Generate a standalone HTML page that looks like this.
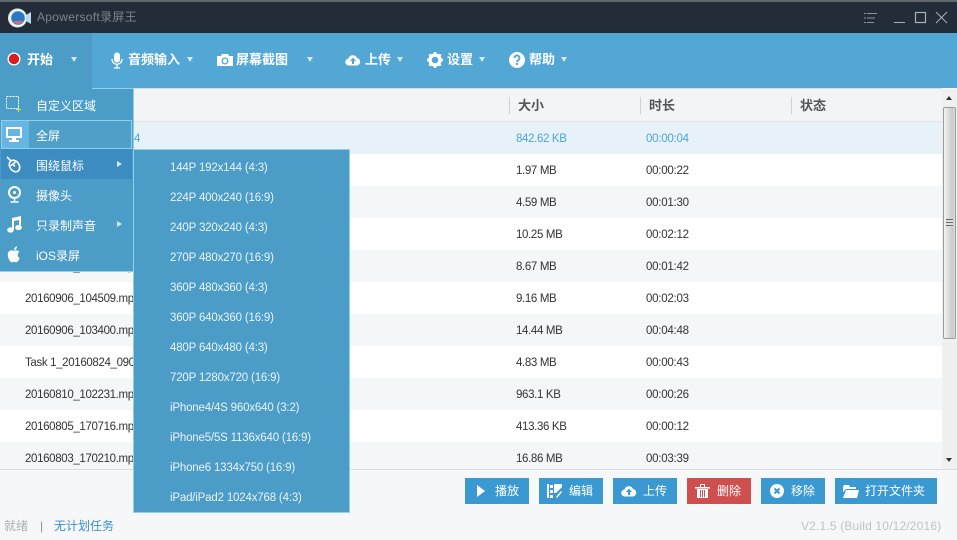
<!DOCTYPE html>
<html><head><meta charset="utf-8">
<style>
html,body{margin:0;padding:0}
body{width:957px;height:540px;overflow:hidden;position:relative;background:#f5f7f9;font-family:"Liberation Sans","Noto Sans CJK SC",sans-serif;font-size:12px;color:#333}
.a{position:absolute}
.t{position:absolute;white-space:nowrap;line-height:16px}
.tb{color:#fff;font-weight:bold;font-size:13px}
.tri{position:absolute;width:0;height:0;border-left:3.5px solid transparent;border-right:3.5px solid transparent;border-top:5px solid #d5e8f3}
.row{position:absolute;left:0;width:942px;height:32px}
.sz{position:absolute;left:516px;margin-top:1px;line-height:16px;white-space:nowrap;font-size:11.5px;letter-spacing:-.35px;color:#333}
.du{position:absolute;left:646px;margin-top:1px;line-height:16px;white-space:nowrap;font-size:11.5px;letter-spacing:-.25px;color:#333}
.fn{position:absolute;left:25px;margin-top:1px;line-height:16px;white-space:nowrap;font-size:11.5px;letter-spacing:-.35px;color:#333}
.hd{position:absolute;top:98px;font-weight:bold;font-size:13px;color:#555;line-height:16px}
.sep{position:absolute;top:97px;width:1px;height:17px;background:#ccd2d7}
.mi{position:absolute;left:36px;color:#fff;font-size:12px;line-height:16px;white-space:nowrap}
.si{position:absolute;left:170px;margin-top:1px;color:#eaf4fa;font-size:11.5px;letter-spacing:-.18px;line-height:16px;white-space:nowrap}
.btn{position:absolute;top:478px;height:26px;background:#3b99d1;color:#fff;font-size:12px;line-height:26px}
.btn span{position:absolute;white-space:nowrap}
.btn svg{position:absolute}
</style></head><body>

<div class="a" style="left:0;top:0;width:957px;height:33px;background:#222d39"></div>
<div class="a" style="left:0;top:0;width:957px;height:2px;background:#5f676d"></div>
<svg class="a" style="left:8px;top:7px" width="24" height="22" viewBox="0 0 24 22">
<circle cx="9.500" cy="11" r="9.500" fill="#e9f3f9"/><circle cx="10" cy="11" r="6.800" fill="#2a78c8"/><path d="M4.500 14a6.500 6.500 0 0 0 11 0z" fill="#e0686a"/><path d="M18 8l5-3v12l-5-3z" fill="#b9dcef"/>
</svg>
<div class="t" style="left:37px;top:9px;color:#7d858c;font-size:12px;letter-spacing:.3px">Apowersoft录屏王</div>
<svg class="a" style="left:860px;top:10px" width="90" height="16" viewBox="0 0 90 16" fill="none" stroke="#aab0b5" stroke-width="1">
<path d="M7 3.500h10M7 8h8M7 12.500h7M4 3.500h2M4 8h2M4 12.500h2" stroke="#8f969c"/>
<path d="M34 12.500h11"/><rect x="55.500" y="2.500" width="10" height="10" stroke-width="1.200"/>
<path d="M76 2l11 11M87 2l-11 11"/>
</svg>

<div class="a" style="left:0;top:33px;width:957px;height:55px;background:#52a7d4"></div>
<div class="a" style="left:0;top:33px;width:92px;height:55px;background:#4b9dc8"></div>
<svg class="a" style="left:7px;top:52px" width="14" height="14"><circle cx="7" cy="7" r="6.500" fill="#fff"/><circle cx="7" cy="7" r="5.200" fill="#d81e1e"/></svg>
<div class="t tb" style="left:27px;top:52px">开始</div>
<div class="tri" style="left:71px;top:57px"></div>
<svg class="a" style="left:110px;top:52px" width="14" height="17" viewBox="0 0 14 17"><rect x="4" y="0.500" width="6" height="10" rx="3" fill="#fff"/><path d="M2 7c0 7 10 7 10 0M7 12v4M4 16h6" stroke="#fff" stroke-width="1.300" fill="none"/></svg>
<div class="t tb" style="left:128px;top:52px">音频输入</div>
<div class="tri" style="left:187px;top:57px"></div>
<svg class="a" style="left:217px;top:53px" width="16" height="14" viewBox="0 0 16 14"><path d="M0 3h4l1-2h6l1 2h4v10H0z" fill="#fff"/><circle cx="8" cy="8" r="3.500" fill="#52a7d4"/><circle cx="8" cy="8" r="2.200" fill="#fff"/></svg>
<div class="t tb" style="left:236px;top:52px">屏幕截图</div>
<div class="tri" style="left:307px;top:57px"></div>
<svg class="a" style="left:345px;top:54px" width="16" height="12" viewBox="0 0 16 12"><path d="M4 11.500a3.500 3.500 0 0 1-.5-7A4.500 4.500 0 0 1 12 4a3.800 3.800 0 0 1 0 7.500z" fill="#fff"/><path d="M8 3.500l3 3.500H9v3H7V7H5z" fill="#52a7d4"/></svg>
<div class="t tb" style="left:365px;top:52px">上传</div>
<div class="tri" style="left:397px;top:57px"></div>
<svg class="a" style="left:427px;top:52px" width="16" height="16" viewBox="0 0 16 16"><circle cx="8" cy="8" r="5" fill="none" stroke="#fff" stroke-width="3.400"/><path d="M8 0v3M8 13v3M0 8h3M13 8h3M2.300 2.300l2 2M11.700 11.700l2 2M13.700 2.300l-2 2M4.300 11.700l-2 2" stroke="#fff" stroke-width="2.400"/></svg>
<div class="t tb" style="left:447px;top:52px">设置</div>
<div class="tri" style="left:479px;top:57px"></div>
<svg class="a" style="left:509px;top:52px" width="16" height="16" viewBox="0 0 16 16"><circle cx="8" cy="8" r="8" fill="#fff"/><path d="M5.500 6a2.500 2.500 0 1 1 3.800 2.100C8.400 8.700 8 9 8 10" stroke="#52a7d4" stroke-width="1.800" fill="none"/><rect x="7" y="11" width="2" height="2" fill="#52a7d4"/></svg>
<div class="t tb" style="left:529px;top:52px">帮助</div>
<div class="tri" style="left:561px;top:57px"></div>

<div class="a" style="left:0;top:88px;width:942px;height:34px;background:#f2f4f6;border-top:1px solid #cfe0ea;box-sizing:border-box"></div>
<div class="a" style="left:0;top:121px;width:942px;height:1px;background:#dfe6eb"></div>
<div class="sep" style="left:509px"></div><div class="sep" style="left:640px"></div><div class="sep" style="left:791px"></div>
<div class="hd" style="left:518px">大小</div><div class="hd" style="left:649px">时长</div><div class="hd" style="left:800px">状态</div>

<div class="row" style="top:122px;background:#e6f2f8"></div>
<div class="row" style="top:154px;background:#fff"></div>
<div class="row" style="top:186px;background:#f5f6f8"></div>
<div class="row" style="top:218px;background:#fff"></div>
<div class="row" style="top:250px;background:#f5f6f8"></div>
<div class="row" style="top:282px;background:#fff"></div>
<div class="row" style="top:314px;background:#f5f6f8"></div>
<div class="row" style="top:346px;background:#fff"></div>
<div class="row" style="top:378px;background:#f5f6f8"></div>
<div class="row" style="top:410px;background:#fff"></div>
<div class="row" style="top:442px;height:27px;background:#f5f6f8"></div>
<div class="a" style="left:0;top:469px;width:957px;height:1px;background:#d5dee4"></div>

<div class="fn" style="top:130px;left:134px;color:#4ea4d6">4</div>
<div class="fn" style="top:258px">20160906_105512.mp4</div>
<div class="fn" style="top:290px">20160906_104509.mp4</div>
<div class="fn" style="top:322px">20160906_103400.mp4</div>
<div class="fn" style="top:354px">Task 1_20160824_090000.mp4</div>
<div class="fn" style="top:386px">20160810_102231.mp4</div>
<div class="fn" style="top:418px">20160805_170716.mp4</div>
<div class="fn" style="top:450px">20160803_170210.mp4</div>

<div class="sz" style="top:130px;color:#4ea4d6">842.62 KB</div><div class="du" style="top:130px;color:#4ea4d6">00:00:04</div>
<div class="sz" style="top:162px">1.97 MB</div><div class="du" style="top:162px">00:00:22</div>
<div class="sz" style="top:194px">4.59 MB</div><div class="du" style="top:194px">00:01:30</div>
<div class="sz" style="top:226px">10.25 MB</div><div class="du" style="top:226px">00:02:12</div>
<div class="sz" style="top:258px">8.67 MB</div><div class="du" style="top:258px">00:01:42</div>
<div class="sz" style="top:290px">9.16 MB</div><div class="du" style="top:290px">00:02:03</div>
<div class="sz" style="top:322px">14.44 MB</div><div class="du" style="top:322px">00:04:48</div>
<div class="sz" style="top:354px">4.83 MB</div><div class="du" style="top:354px">00:00:43</div>
<div class="sz" style="top:386px">963.1 KB</div><div class="du" style="top:386px">00:00:26</div>
<div class="sz" style="top:418px">413.36 KB</div><div class="du" style="top:418px">00:00:12</div>
<div class="sz" style="top:450px">16.86 MB</div><div class="du" style="top:450px">00:03:39</div>

<div class="a" style="left:942px;top:89px;width:15px;height:380px;background:#f0f0f0"></div>
<div class="a" style="left:943px;top:107px;width:13px;height:232px;box-sizing:border-box;border:1px solid #9a9a9a;border-radius:2px;background:linear-gradient(90deg,#f2f2f2,#d6d6d6 55%,#c8c8c8 80%,#e2e2e2)"></div>
<div class="a" style="left:946px;top:219px;width:7px;height:8px;background:repeating-linear-gradient(180deg,#666 0 1px,#ddd 1px 3px)"></div>
<div class="a" style="left:946px;top:96px;width:0;height:0;border-left:3.500px solid transparent;border-right:3.500px solid transparent;border-bottom:4px solid #333"></div>
<div class="a" style="left:946px;top:458px;width:0;height:0;border-left:3.500px solid transparent;border-right:3.500px solid transparent;border-top:4px solid #333"></div>

<div class="btn" style="left:465px;width:64px"><svg style="left:12px;top:7px" width="8" height="12"><path d="M0 0l8 6-8 6z" fill="#fff"/></svg><span style="left:30px">播放</span></div>
<div class="btn" style="left:539px;width:64px"><svg style="left:8px;top:6px" width="15" height="14"><path d="M0 0h2v14H0zM3 1h3v3H3zM3 6h3v3H3zM3 11h3v3H3zM7 0h8v3l-6 6-2 0z" fill="#fff"/><path d="M9 13l5-6 1 1-5 6z" fill="#fff"/></svg><span style="left:30px">编辑</span></div>
<div class="btn" style="left:613px;width:64px"><svg style="left:8px;top:6px" width="16" height="14" viewBox="0 0 16 12"><path d="M4 11.500a3.500 3.500 0 0 1-.5-7A4.500 4.500 0 0 1 12 4a3.800 3.800 0 0 1 0 7.500z" fill="#fff"/><path d="M8 3.500l3 3.500H9v3H7V7H5z" fill="#3b99d1"/></svg><span style="left:30px">上传</span></div>
<div class="btn" style="left:687px;width:64px;background:#cf4f4f"><svg style="left:8px;top:6px" width="15" height="14"><path d="M0 3h15v1.500H0zM5 0h5v3H9V1H6v2H5zM2 5h11v9H2z" fill="#fff"/><path d="M5.500 6v7M7.500 6v7M9.500 6v7" stroke="#cf4f4f"/></svg><span style="left:30px">删除</span></div>
<div class="btn" style="left:761px;width:64px"><svg style="left:9px;top:6px" width="14" height="14"><circle cx="7" cy="7" r="7" fill="#fff"/><path d="M4.500 4.500l5 5M9.500 4.500l-5 5" stroke="#3b99d1" stroke-width="2"/></svg><span style="left:30px">移除</span></div>
<div class="btn" style="left:835px;width:102px"><svg style="left:8px;top:7px" width="16" height="13"><path d="M0 2l1-2h5l1 2h6v2H3L0 7z" fill="#fff"/><path d="M3 5h13l-2 8H0z" fill="#fff"/></svg><span style="left:30px">打开文件夹</span></div>

<div class="t" style="left:4px;top:518px;color:#aab0b5">就绪</div>
<div class="t" style="left:40px;top:518px;color:#8a9096">|</div>
<div class="t" style="left:54px;top:518px;color:#3b8fc6">无计划任务</div>
<div class="t" style="left:801px;top:518px;color:#bfc3c7;font-size:12px;letter-spacing:.17px">V2.1.5 (Build 10/12/2016)</div>

<div class="a" style="left:0;top:88px;width:134px;height:184px;box-sizing:border-box;background:#4b9cc6;border-right:1px solid #8fd0f0;border-bottom:1px solid #8fd0f0"></div>
<div class="a" style="left:92px;top:88px;width:42px;height:1px;background:#8fd0f0"></div>
<div class="a" style="left:1px;top:120px;width:131px;height:29px;box-sizing:border-box;border:1px solid #8fd0f0;background:#4f9fc9"></div>
<div class="a" style="left:2px;top:121px;width:27px;height:27px;background:#66b5e2"></div>
<div class="a" style="left:1px;top:149px;width:131px;height:30px;background:#3c8bc1"></div>

<svg class="a" style="left:6px;top:96px" width="16" height="16"><rect x="0.500" y="0.500" width="12" height="12" fill="none" stroke="#fff" stroke-dasharray="2 1"/><path d="M10 13.500h5M12.500 11v5" stroke="#d8e84a"/></svg>
<svg class="a" style="left:6px;top:127px" width="16" height="15"><path d="M0 0h16v11H0z" fill="#fff"/><path d="M2 2h12v7H2z" fill="#66b5e2"/><path d="M6 11h4v2H6zM3 13h10v2H3z" fill="#fff"/></svg>
<svg class="a" style="left:6px;top:156px" width="16" height="18" viewBox="0 0 16 18" fill="none" stroke="#fff" stroke-width="1.600"><path d="M1 1l3.500 3.500"/><ellipse cx="8.500" cy="10" rx="4.700" ry="6.200" transform="rotate(-35 8.500 10)"/><path d="M4.500 10l5-4M7 8l2 2.500"/></svg>
<svg class="a" style="left:7px;top:186px" width="15" height="17" fill="none" stroke="#fff" stroke-width="2"><circle cx="7.500" cy="6.500" r="5.500"/><circle cx="7.500" cy="6.500" r="1.500" fill="#fff" stroke="none"/><path d="M7.500 12v3M3.500 16h8" stroke-width="1.500"/></svg>
<svg class="a" style="left:7px;top:216px" width="15" height="17"><path d="M5 2l9-2v11h-2V4L7 5v9H5z" fill="#fff"/><ellipse cx="3.500" cy="14" rx="3.300" ry="2.600" fill="#fff"/><ellipse cx="11.500" cy="11.500" rx="3.300" ry="2.600" fill="#fff"/></svg>
<svg class="a" style="left:7px;top:246px" width="14" height="17" viewBox="0 0 14 17"><path d="M7 5C5 3.800 1 4 .8 8.500.6 12 3 16.500 5 16.300c1 0 1.200-.6 2-.6s1.200.6 2 .6c1.500 0 3-2.500 3.700-4.300-2.500-1.200-2.700-4.800-.2-6.100C11 3.800 8.500 4.200 7 5z" fill="#fff"/><path d="M7 4.200C7 2.200 8.500.6 10 .4c.2 2-1.500 3.800-3 3.800z" fill="#fff"/></svg>

<div class="mi" style="top:98px">自定义区域</div>
<div class="mi" style="top:128px">全屏</div>
<div class="mi" style="top:158px">围绕鼠标</div>
<div class="mi" style="top:188px">摄像头</div>
<div class="mi" style="top:218px">只录制声音</div>
<div class="mi" style="top:248px">iOS录屏</div>
<div class="a" style="left:117px;top:161px;width:0;height:0;border-top:3.500px solid transparent;border-bottom:3.500px solid transparent;border-left:5px solid #d5e8f3"></div>
<div class="a" style="left:117px;top:221px;width:0;height:0;border-top:3.500px solid transparent;border-bottom:3.500px solid transparent;border-left:5px solid #d5e8f3"></div>

<div class="a" style="left:133px;top:149px;width:217px;height:364px;box-sizing:border-box;background:#4b9cc6;border:1px solid #8fd0f0"></div>
<div class="si" style="top:159px">144P 192x144 (4:3)</div>
<div class="si" style="top:189px">224P 400x240 (16:9)</div>
<div class="si" style="top:219px">240P 320x240 (4:3)</div>
<div class="si" style="top:249px">270P 480x270 (16:9)</div>
<div class="si" style="top:279px">360P 480x360 (4:3)</div>
<div class="si" style="top:309px">360P 640x360 (16:9)</div>
<div class="si" style="top:339px">480P 640x480 (4:3)</div>
<div class="si" style="top:369px">720P 1280x720 (16:9)</div>
<div class="si" style="top:399px">iPhone4/4S 960x640 (3:2)</div>
<div class="si" style="top:429px">iPhone5/5S 1136x640 (16:9)</div>
<div class="si" style="top:459px">iPhone6 1334x750 (16:9)</div>
<div class="si" style="top:489px">iPad/iPad2 1024x768 (4:3)</div>
</body></html>
